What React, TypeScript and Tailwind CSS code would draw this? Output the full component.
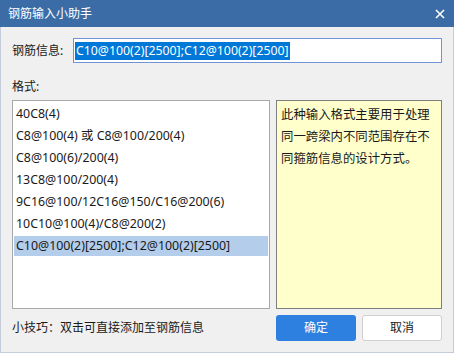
import React from "react";

const font = { fontFamily: '"Noto Sans", "Noto Sans CJK SC", sans-serif' };

const items = [
  "40C8(4)",
  "C8@100(4) 或 C8@100/200(4)",
  "C8@100(6)/200(4)",
  "13C8@100/200(4)",
  "9C16@100/12C16@150/C16@200(6)",
  "10C10@100(4)/C8@200(2)",
  "C10@100(2)[2500];C12@100(2)[2500]",
];

export default function App() {
  return (
    <div className="w-[454px] h-[353px] flex flex-col text-[12px] text-[#1a1a1a] font-['Noto_Sans','Noto_Sans_CJK_SC',sans-serif]" style={font}>
      <div className="h-[27px] shrink-0 bg-[#3b6ca6] flex items-center justify-between pl-[8px] pr-[9px] text-white">
        <span className="text-[12px] leading-none">钢筋输入小助手</span>
        <svg width="10" height="10" viewBox="0 0 10 10">
          <path d="M1 1 L9 9 M9 1 L1 9" stroke="white" strokeWidth="1.6" />
        </svg>
      </div>
      <div className="flex-1 bg-[#f0f0f0] border-x border-b border-[#c3ccd8] flex flex-col pl-[11px] pr-[11px]">
        <div className="flex items-center mt-[11px] h-[25px]">
          <span className="w-[61px] shrink-0">钢筋信息:</span>
          <div className="flex-1 h-[25px] bg-white border border-[#6f94d8] flex items-center pl-[1px]">
            <span className="bg-[#0078d7] text-white h-[18px] leading-[18px] px-[1px] text-[12.3px]">C10@100(2)[2500];C12@100(2)[2500]</span>
          </div>
        </div>
        <div className="mt-[16px] h-[16px] leading-[16px]">格式:</div>
        <div className="flex gap-[6px] mt-[5px] h-[209px]">
          <div className="w-[258px] shrink-0 bg-white border border-[#a9a9a9] p-[1px] pt-[2px]">
            {items.map((t, i) => (
              <div key={i} className="h-[22px] py-[1px]">
                <div className={`h-[20px] leading-[20px] pl-[2px] text-[12.4px] whitespace-nowrap ${i === items.length - 1 ? "bg-[#b3cdea]" : ""}`}>{t}</div>
              </div>
            ))}
          </div>
          <div className="flex-1 bg-[#ffffcc] border border-[#7f7f7f] px-[4px] pt-[3px] leading-[22px] text-[12.4px]">
            此种输入格式主要用于处理同一跨梁内不同范围存在不同箍筋信息的设计方式。
          </div>
        </div>
        <div className="flex items-center mt-[6px]">
          <span className="flex-1">小技巧：双击可直接添加至钢筋信息</span>
          <button className="w-[80px] h-[26px] rounded-[3px] bg-[#2e80e0] text-white">确定</button>
          <button className="w-[80px] h-[26px] rounded-[3px] bg-white border border-[#d0d0d0] ml-[6px]">取消</button>
        </div>
      </div>
    </div>
  );
}
